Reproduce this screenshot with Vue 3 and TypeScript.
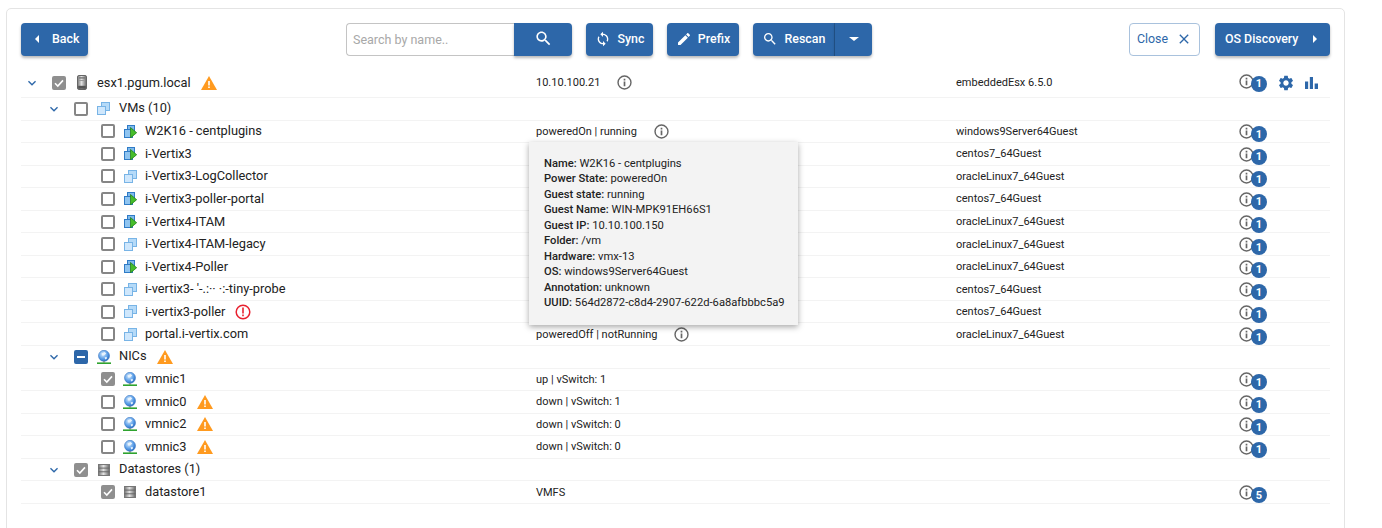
<script setup lang="ts">
interface Row {
  level: number
  name: string
  icon: string
  check: 'none' | 'checked' | 'mixed'
  expand?: boolean
  alert?: 'warn' | 'error'
  status?: string
  info?: boolean
  os?: string
  count?: number
  tools?: boolean
}

// Rows whose status cell lies under the open tooltip show no status of their own.
const vm = (name: string, on: boolean, os: string, covered: boolean, alert?: 'error'): Row => ({
  level: 2,
  name,
  icon: on ? 'i-vm-on' : 'i-vm',
  check: 'none',
  status: covered ? undefined : on ? 'poweredOn | running' : 'poweredOff | notRunning',
  info: !covered,
  os,
  count: 1,
  alert,
})

const nic = (name: string, state: string, sw: number, checked: boolean): Row => ({
  level: 2,
  name,
  icon: 'i-nic',
  check: checked ? 'checked' : 'none',
  status: `${state} | vSwitch: ${sw}`,
  count: 1,
  alert: state === 'down' ? 'warn' : undefined,
})

const rows: Row[] = [
  { level: 0, name: 'esx1.pgum.local', icon: 'i-server', check: 'checked', expand: true, alert: 'warn', status: '10.10.100.21', info: true, os: 'embeddedEsx 6.5.0', count: 1, tools: true },
  { level: 1, name: 'VMs (10)', icon: 'i-vm', check: 'none', expand: true },
  vm('W2K16 - centplugins', true, 'windows9Server64Guest', false),
  vm('i-Vertix3', true, 'centos7_64Guest', true),
  vm('i-Vertix3-LogCollector', false, 'oracleLinux7_64Guest', true),
  vm('i-Vertix3-poller-portal', true, 'centos7_64Guest', true),
  vm('i-Vertix4-ITAM', true, 'oracleLinux7_64Guest', true),
  vm('i-Vertix4-ITAM-legacy', false, 'oracleLinux7_64Guest', true),
  vm('i-Vertix4-Poller', true, 'oracleLinux7_64Guest', true),
  vm("i-vertix3- '-.:·· ·:-tiny-probe", false, 'centos7_64Guest', true),
  vm('i-vertix3-poller', false, 'centos7_64Guest', true, 'error'),
  vm('portal.i-vertix.com', false, 'oracleLinux7_64Guest', false),
  { level: 1, name: 'NICs', icon: 'i-nic', check: 'mixed', expand: true, alert: 'warn' },
  nic('vmnic1', 'up', 1, true),
  nic('vmnic0', 'down', 1, false),
  nic('vmnic2', 'down', 0, false),
  nic('vmnic3', 'down', 0, false),
  { level: 1, name: 'Datastores (1)', icon: 'i-store', check: 'checked', expand: true },
  { level: 2, name: 'datastore1', icon: 'i-store', check: 'checked', status: 'VMFS', count: 5 },
]

const details: [string, string][] = [
  ['Name:', 'W2K16 - centplugins'],
  ['Power State:', 'poweredOn'],
  ['Guest state:', 'running'],
  ['Guest Name:', 'WIN-MPK91EH66S1'],
  ['Guest IP:', '10.10.100.150'],
  ['Folder:', '/vm'],
  ['Hardware:', 'vmx-13'],
  ['OS:', 'windows9Server64Guest'],
  ['Annotation:', 'unknown'],
  ['UUID:', '564d2872-c8d4-2907-622d-6a8afbbbc5a9'],
]
</script>

<template>
  <svg class="sprite" width="0" height="0" aria-hidden="true">
    <defs>
      <linearGradient id="g-metal" x1="0" x2="1" y1="0" y2="0">
        <stop offset="0" stop-color="#777" /><stop offset="0.45" stop-color="#e2e2e2" /><stop offset="1" stop-color="#666" />
      </linearGradient>
      <radialGradient id="g-globe" cx="0.4" cy="0.35" r="0.7">
        <stop offset="0" stop-color="#d8ebfc" /><stop offset="0.6" stop-color="#5a9ee8" /><stop offset="1" stop-color="#2b69bd" />
      </radialGradient>
      <symbol id="i-chevron" viewBox="0 0 24 24"><path fill="currentColor" d="M16.59 8.59L12 13.17 7.41 8.59 6 10l6 6 6-6z" /></symbol>
      <symbol id="i-search" viewBox="0 0 24 24"><path fill="currentColor" d="M15.5 14h-.79l-.28-.27C15.41 12.59 16 11.11 16 9.5 16 5.91 13.09 3 9.5 3S3 5.91 3 9.5 5.91 16 9.5 16c1.61 0 3.09-.59 4.23-1.57l.27.28v.79l5 4.99L20.49 19l-4.99-5zm-6 0C7.01 14 5 11.99 5 9.5S7.01 5 9.5 5 14 7.01 14 9.5 11.99 14 9.5 14z" /></symbol>
      <symbol id="i-sync" viewBox="0 0 24 24"><path fill="currentColor" d="M12 4V1L8 5l4 4V6c3.31 0 6 2.69 6 6 0 1.01-.25 1.97-.7 2.8l1.46 1.46C19.54 15.03 20 13.57 20 12c0-4.42-3.58-8-8-8zm0 14c-3.31 0-6-2.69-6-6 0-1.01.25-1.97.7-2.8L5.24 7.74C4.46 8.97 4 10.43 4 12c0 4.42 3.58 8 8 8v3l4-4-4-4v3z" /></symbol>
      <symbol id="i-edit" viewBox="0 0 24 24"><path fill="currentColor" d="M3 17.25V21h3.75L17.81 9.94l-3.75-3.75L3 17.25zM20.71 7.04c.39-.39.39-1.02 0-1.41l-2.34-2.34c-.39-.39-1.02-.39-1.41 0l-1.83 1.83 3.75 3.75 1.83-1.83z" /></symbol>
      <symbol id="i-close" viewBox="0 0 24 24"><path fill="currentColor" d="M19 6.41L17.59 5 12 10.59 6.41 5 5 6.41 10.59 12 5 17.59 6.41 19 12 13.41 17.59 19 19 17.59 13.41 12z" /></symbol>
      <symbol id="i-gear" viewBox="0 0 24 24"><path fill="currentColor" d="M19.14 12.94c.04-.3.06-.61.06-.94 0-.32-.02-.64-.07-.94l2.03-1.58c.18-.14.23-.41.12-.61l-1.92-3.32c-.12-.22-.37-.29-.59-.22l-2.39.96c-.5-.38-1.03-.7-1.62-.94l-.36-2.54c-.04-.24-.24-.41-.48-.41h-3.84c-.24 0-.43.17-.47.41l-.36 2.54c-.59.24-1.13.57-1.62.94l-2.39-.96c-.22-.08-.47 0-.59.22L2.74 8.87c-.12.21-.08.47.12.61l2.03 1.58c-.05.3-.09.63-.09.94s.02.64.07.94l-2.03 1.58c-.18.14-.23.41-.12.61l1.92 3.32c.12.22.37.29.59.22l2.39-.96c.5.38 1.03.7 1.62.94l.36 2.54c.05.24.24.41.48.41h3.84c.24 0 .44-.17.47-.41l.36-2.54c.59-.24 1.13-.56 1.62-.94l2.39.96c.22.08.47 0 .59-.22l1.92-3.32c.12-.22.07-.47-.12-.61l-2.01-1.58zM12 15.6c-1.98 0-3.6-1.62-3.6-3.6s1.62-3.6 3.6-3.6 3.6 1.62 3.6 3.6-1.62 3.6-3.6 3.6z" /></symbol>
      <symbol id="i-bars" viewBox="0 0 14 14"><path fill="currentColor" d="M0 6h3.4v8H0zM5.2 1h3.4v13H5.2zM10.4 8H14v6h-3.6z" /></symbol>
      <symbol id="i-info" viewBox="0 0 16 16"><circle cx="8" cy="8" r="6.9" fill="none" stroke="currentColor" stroke-width="1.5" /><path fill="currentColor" d="M7.1 7h1.8v5H7.1zM7.1 4h1.8v1.8H7.1z" /></symbol>
      <symbol id="i-warn" viewBox="0 0 16 14"><path fill="#ff9a1f" d="M8 0l8 14H0z" /><path fill="#fff" d="M7.2 5h1.6v4.4H7.2zM7.2 10.4h1.6V12H7.2z" /></symbol>
      <symbol id="i-error" viewBox="0 0 16 16"><circle cx="8" cy="8" r="6.8" fill="none" stroke="#e8212f" stroke-width="1.5" /><path fill="#e8212f" d="M7.2 3.6h1.6v5.8H7.2zM7.2 10.6h1.6v1.7H7.2z" /></symbol>
      <symbol id="i-server" viewBox="0 0 10 15"><rect x="0.5" y="0.5" width="9" height="14" rx="1.4" fill="url(#g-metal)" stroke="#666" /><rect x="2" y="2.2" width="6" height="1.4" fill="#777" /><rect x="2" y="5" width="6" height="1" fill="#999" /><rect x="1.2" y="10.8" width="7.6" height="3" fill="#555" /></symbol>
      <symbol id="i-vm" viewBox="0 0 13 13"><rect x="4.5" y="0.5" width="8" height="8" fill="#b5daf8" stroke="#78b4e6" /><rect x="0.5" y="4.5" width="8" height="8" fill="#cfe7fc" stroke="#78b4e6" /></symbol>
      <symbol id="i-vm-on" viewBox="0 0 13 13"><rect x="3.5" y="0.5" width="7" height="7" fill="#7fb9ec" stroke="#2f7bc6" /><rect x="0.5" y="4.5" width="8" height="8" fill="#8fc4f0" stroke="#2f7bc6" /><path d="M6.5 2.5l6.2 5.2-6.2 5.2z" fill="#46bd2a" stroke="#1c7a10" stroke-width="0.7" /></symbol>
      <symbol id="i-nic" viewBox="0 0 14 14"><circle cx="7" cy="5.8" r="5.5" fill="url(#g-globe)" stroke="#3a78c4" stroke-width="0.6" /><path d="M4.6 3.6l3-1.6 1.6 1.4L7 5.6 5.2 5.6zM7.6 7.6l2-.8.4 1.6-1.8 1z" fill="#e8f3fd" /><path d="M6.2 11.2h1.6v1.2H6.2z" fill="#777" /><rect x="0" y="12.4" width="14" height="1.6" fill="#2fa32f" /></symbol>
      <symbol id="i-store" viewBox="0 0 12 12"><rect x="0.5" y="0.5" width="11" height="11" fill="url(#g-metal)" stroke="#777" /><path d="M0.5 4.1h11M0.5 7.8h11" stroke="#666" /></symbol>
    </defs>
  </svg>

  <div class="page">
    <section class="card">
      <header class="toolbar">
        <div class="group-left">
          <button class="btn back"><span class="tri tri-left"></span>Back</button>
        </div>
        <div class="group-center">
          <div class="search">
            <input class="search-input" type="text" placeholder="Search by name.." />
            <button class="btn search-btn"><svg class="ic18"><use href="#i-search" /></svg></button>
          </div>
          <button class="btn sync"><svg class="ic16"><use href="#i-sync" /></svg>Sync</button>
          <button class="btn prefix"><svg class="ic16"><use href="#i-edit" /></svg>Prefix</button>
          <div class="split">
            <button class="btn rescan"><svg class="ic16"><use href="#i-search" /></svg>Rescan</button>
            <button class="btn caret"><span class="tri tri-down"></span></button>
          </div>
        </div>
        <div class="group-right">
          <button class="btn-outline">Close<svg class="ic16"><use href="#i-close" /></svg></button>
          <button class="btn discovery">OS Discovery<span class="tri tri-right"></span></button>
        </div>
      </header>

      <div class="tree">
        <div v-for="(r, i) in rows" :key="i" class="row" :class="[`lvl${r.level}`, { top: i === 0 }]">
          <div class="col-name">
            <span class="toggle">
              <svg v-if="r.expand" class="chev"><use href="#i-chevron" /></svg>
            </span>
            <span class="box" :class="r.check">
              <svg v-if="r.check === 'checked'" class="tick" viewBox="0 0 12 12"><path d="M2 6.2l2.8 2.8L10 3.4" fill="none" stroke="#fff" stroke-width="1.6" /></svg>
              <span v-else-if="r.check === 'mixed'" class="dash"></span>
            </span>
            <span class="type-icon">
              <svg :class="r.icon"><use :href="`#${r.icon}`" /></svg>
            </span>
            <span class="label">{{ r.name }}</span>
            <svg v-if="r.alert === 'warn'" class="warn"><use href="#i-warn" /></svg>
            <svg v-if="r.alert === 'error'" class="error"><use href="#i-error" /></svg>
          </div>
          <div class="col-status">
            <span v-if="r.status">{{ r.status }}</span>
            <svg v-if="r.info" class="info-lg"><use href="#i-info" /></svg>
          </div>
          <div class="col-os">{{ r.os }}</div>
          <div class="col-actions">
            <span v-if="r.count" class="count">
              <svg class="info-lg"><use href="#i-info" /></svg>
              <span class="badge">{{ r.count }}</span>
            </span>
            <template v-if="r.tools">
              <svg class="gear"><use href="#i-gear" /></svg>
              <svg class="bars"><use href="#i-bars" /></svg>
            </template>
          </div>
        </div>

        <aside class="tooltip">
          <div v-for="d in details" :key="d[0]" class="tip-line"><b>{{ d[0] }}</b> {{ d[1] }}</div>
        </aside>
      </div>
    </section>
  </div>
</template>

<style scoped>
.sprite { position: absolute; }
.page {
  box-sizing: border-box;
  height: 528px;
  padding: 8px 0 0 6px;
  overflow: hidden;
  font-family: Roboto, "Liberation Sans", sans-serif;
  background: #fff;
  color: #222;
}
.card {
  box-sizing: border-box;
  width: 1339px;
  height: 560px;
  border: 1px solid #e4e4e4;
  border-radius: 5px;
  padding: 14px 14px 0 14px;
}
.toolbar {
  display: grid;
  grid-template-columns: 325px 783px 1fr;
  height: 33px;
}
.group-center { display: flex; gap: 14px; }
.group-right { display: flex; gap: 15px; justify-content: flex-end; }
.btn {
  display: inline-flex;
  align-items: center;
  justify-content: center;
  box-sizing: border-box;
  height: 33px;
  border: 0;
  border-radius: 4px;
  padding: 0 0 2px;
  background: #2d67a9;
  color: #fff;
  font: 500 12.4px Roboto, sans-serif;
  box-shadow: 0 2px 3px rgba(0, 0, 0, 0.28);
}
.ic16 { width: 16px; height: 16px; flex: none; }
.ic18 { width: 19px; height: 19px; flex: none; }
.tri { width: 0; height: 0; flex: none; border-style: solid; border-color: transparent; }
.tri-left { border-width: 4px 4px 4px 0; border-right-color: #fff; margin-right: 13px; }
.tri-right { border-width: 4px 0 4px 4px; border-left-color: #fff; margin-left: 15px; }
.tri-down { border-width: 4px 5px 0 5px; border-top-color: #fff; }
.back { width: 67px; justify-content: flex-start; padding-left: 14px; }
.search { display: flex; width: 226px; }
.search-input {
  box-sizing: border-box;
  width: 168px;
  height: 33px;
  border: 1px solid #c4c4c4;
  border-right: 0;
  border-radius: 4px 0 0 4px;
  padding: 0 6px;
  font: 12.5px Roboto, sans-serif;
  outline: none;
}
.search-input::placeholder { color: #a8a8a8; }
.search-btn { width: 58px; border-radius: 0 4px 4px 0; }
.sync { width: 67px; gap: 7px; }
.prefix { width: 72px; gap: 6px; }
.split { display: flex; width: 119px; }
.rescan { width: 82px; gap: 7px; border-radius: 4px 0 0 4px; border-right: 1px solid #24578f; }
.caret { width: 37px; border-radius: 0 4px 4px 0; }
.btn-outline {
  display: inline-flex;
  align-items: center;
  justify-content: center;
  gap: 8px;
  box-sizing: border-box;
  width: 71px;
  height: 33px;
  border: 1px solid #a9c2dd;
  border-radius: 4px;
  padding: 0 0 2px;
  background: #fff;
  color: #2d67a9;
  font: 400 12.4px Roboto, sans-serif;
}
.discovery { width: 115px; justify-content: flex-start; padding-left: 10px; }

.tree { position: relative; margin-top: 15px; width: 1309px; }
.row {
  display: flex;
  align-items: center;
  box-sizing: border-box;
  height: 22.56px;
  border-bottom: 1px solid #f3f3f3;
}
.row.top { height: 27px; padding-bottom: 3px; }
.col-name { display: flex; align-items: center; width: 515px; flex: none; }
.lvl1 .col-name { padding-left: 22px; box-sizing: border-box; }
.lvl2 .col-name { padding-left: 49px; box-sizing: border-box; }
.toggle { display: flex; align-items: center; justify-content: center; width: 22px; height: 16px; margin-right: 9px; flex: none; }
.chev { width: 16px; height: 16px; color: #2d67a9; }
.box {
  display: flex;
  align-items: center;
  justify-content: center;
  box-sizing: border-box;
  width: 14px;
  height: 14px;
  flex: none;
  border: 2px solid #868686;
  border-radius: 2px;
}
.box.checked { background: #8f8f8f; border-color: #8f8f8f; }
.box.mixed { background: #2d67a9; border-color: #2d67a9; }
.tick { width: 12px; height: 12px; flex: none; }
.dash { width: 8px; height: 2px; background: #fff; }
.type-icon { display: flex; align-items: center; justify-content: center; width: 31px; flex: none; }
.lvl2 .type-icon { width: 30px; }
.type-icon svg { display: block; }
.i-vm, .i-vm-on { width: 13px; height: 13px; }
.i-nic { width: 14px; height: 14px; }
.i-store { width: 12px; height: 12px; }
.i-server { width: 10px; height: 15px; }
.label { font-size: 12.8px; line-height: 16px; color: #222; white-space: nowrap; position: relative; }
.lvl1 .label { top: -1px; }
.warn { width: 16px; height: 14px; margin-left: 10px; flex: none; }
.error { width: 16px; height: 16px; margin-left: 10px; flex: none; }
.col-status { display: flex; align-items: center; gap: 17px; width: 420px; flex: none; font-size: 11px; color: #222; }
.col-os { width: 283px; flex: none; font-size: 11px; color: #222; }
.col-actions { display: flex; align-items: center; flex: 1; }
.info-lg { width: 15px; height: 15px; color: #666; flex: none; display: block; }
.count { position: relative; display: block; width: 28px; height: 16px; top: 1px; }
.top .count { top: -1px; }
.badge {
  position: absolute;
  left: 12px;
  top: 2px;
  display: flex;
  align-items: center;
  justify-content: center;
  width: 16px;
  height: 16px;
  border-radius: 50%;
  background: #2d67a9;
  color: #fff;
  font-size: 11px;
  font-weight: 700;
}
.gear { width: 18px; height: 18px; margin-left: 10px; color: #2d67a9; flex: none; }
.bars { width: 13px; height: 13px; margin-left: 10px; color: #2d67a9; flex: none; }
.tooltip {
  position: absolute;
  left: 508px;
  top: 71px;
  box-sizing: border-box;
  width: 269px;
  height: 183px;
  padding: 14px 15px;
  background: #f3f3f3;
  box-shadow: 0 2px 6px rgba(0, 0, 0, 0.35);
  font-size: 11.2px;
  color: #222;
}
.tip-line { height: 15.45px; line-height: 15.45px; white-space: nowrap; }
.tip-line b { font-weight: 500; }
</style>

<style>
html, body { margin: 0; overflow: hidden; background: #fff; }
</style>
